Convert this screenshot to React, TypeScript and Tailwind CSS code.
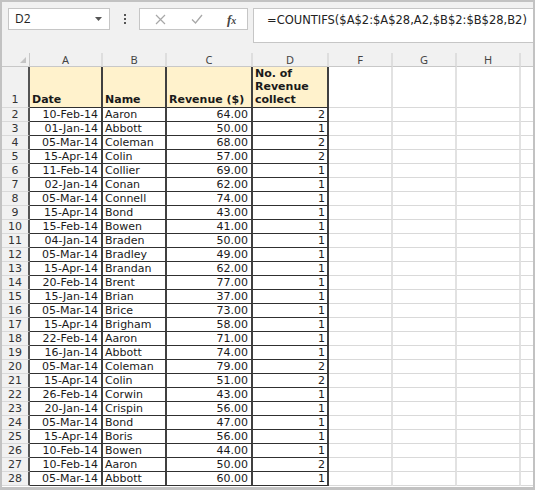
import React from "react";

const ROWS: [string, string, string, string][] = [
  ["10-Feb-14", "Aaron", "64.00", "2"],
  ["01-Jan-14", "Abbott", "50.00", "1"],
  ["05-Mar-14", "Coleman", "68.00", "2"],
  ["15-Apr-14", "Colin", "57.00", "2"],
  ["11-Feb-14", "Collier", "69.00", "1"],
  ["02-Jan-14", "Conan", "62.00", "1"],
  ["05-Mar-14", "Connell", "74.00", "1"],
  ["15-Apr-14", "Bond", "43.00", "1"],
  ["15-Feb-14", "Bowen", "41.00", "1"],
  ["04-Jan-14", "Braden", "50.00", "1"],
  ["05-Mar-14", "Bradley", "49.00", "1"],
  ["15-Apr-14", "Brandan", "62.00", "1"],
  ["20-Feb-14", "Brent", "77.00", "1"],
  ["15-Jan-14", "Brian", "37.00", "1"],
  ["05-Mar-14", "Brice", "73.00", "1"],
  ["15-Apr-14", "Brigham", "58.00", "1"],
  ["22-Feb-14", "Aaron", "71.00", "1"],
  ["16-Jan-14", "Abbott", "74.00", "1"],
  ["05-Mar-14", "Coleman", "79.00", "2"],
  ["15-Apr-14", "Colin", "51.00", "2"],
  ["26-Feb-14", "Corwin", "43.00", "1"],
  ["20-Jan-14", "Crispin", "56.00", "1"],
  ["05-Mar-14", "Bond", "47.00", "1"],
  ["15-Apr-14", "Boris", "56.00", "1"],
  ["10-Feb-14", "Bowen", "44.00", "1"],
  ["10-Feb-14", "Aaron", "50.00", "2"],
  ["05-Mar-14", "Abbott", "60.00", "1"],
];

const cell = "box-border shrink-0 border-b border-r-2 border-b-[#303030] border-r-[#404040] flex items-center";
const empty = "box-border shrink-0 border-b border-r-2 border-b-[#d9d9d9] border-r-[#e2e2e2]";

function Toolbar() {
  return (
    <div className="flex h-[51px] shrink-0 items-start bg-[#f1f1f1] pl-[6px] pt-[6px]">
      <div className="box-border flex h-[22px] w-[102px] items-center justify-between border border-[#c6c6c6] bg-white pl-[6px] pr-[7px] font-['Open_Sans',sans-serif] text-[12px] text-[#222]">
        <span>D2</span>
        <svg width="7" height="4" viewBox="0 0 7 4">
          <path d="M0 0h7L3.5 4z" fill="#555" />
        </svg>
      </div>
      <div className="flex h-[22px] w-[29px] flex-col items-center justify-center gap-[2px]">
        <span className="h-[2px] w-[2px] bg-[#555]" />
        <span className="h-[2px] w-[2px] bg-[#555]" />
        <span className="h-[2px] w-[2px] bg-[#555]" />
      </div>
      <div className="box-border flex h-[22px] w-[109px] items-center border border-[#c6c6c6] bg-white">
        <svg className="ml-[15px]" width="11" height="11" viewBox="0 0 11 11">
          <path d="M1 1l9 9M10 1l-9 9" stroke="#a8a8a8" strokeWidth="1.2" />
        </svg>
        <svg className="ml-[25px]" width="12" height="10" viewBox="0 0 12 10">
          <path d="M1 5.5l3.5 3.5L11 1" stroke="#a8a8a8" strokeWidth="1.3" fill="none" />
        </svg>
        <span className="ml-[24px] font-['Liberation_Serif',serif] text-[13px] font-bold italic leading-none text-[#444]">
          f<span className="text-[10px]">x</span>
        </span>
      </div>
      <div className="ml-[5px] box-border h-[35px] flex-1 border border-r-0 border-[#c6c6c6] bg-white pl-[13px] pt-[3px] font-['DejaVu_Sans',sans-serif] text-[11.5px] text-[#222]">
        =COUNTIFS($A$2:$A$28,A2,$B$2:$B$28,B2)
      </div>
    </div>
  );
}

function HeaderRow() {
  const cols: [string, string][] = [
    ["A", "w-[73px]"],
    ["B", "w-[64px]"],
    ["C", "w-[86px]"],
    ["D", "w-[76px]"],
    ["F", "w-[64px]"],
    ["G", "w-[64px]"],
    ["H", "w-[64px]"],
  ];
  return (
    <div className="flex h-[14px] shrink-0 bg-[#f1f1f1] font-['Noto_Sans',sans-serif] text-[11px] text-[#444]">
      <div className="relative box-border w-[28px] shrink-0 border-b border-r border-[#c8c8c8]">
        <svg className="absolute right-[3px] bottom-[3px]" width="6" height="6" viewBox="0 0 6 6">
          <path d="M6 0v6H0z" fill="#c4c4c4" />
        </svg>
      </div>
      {cols.map(([k, w]) => (
        <div
          key={k}
          className={`box-border flex shrink-0 items-center justify-center border-b border-r-2 border-b-[#c8c8c8] border-r-[#dedede] leading-none ${w}`}
        >
          {k}
        </div>
      ))}
      <div className="box-border flex-1 border-b border-[#c8c8c8]" />
    </div>
  );
}

export default function App() {
  return (
    <div className="box-border flex h-[490px] w-[535px] flex-col overflow-hidden border-2 border-b-[3px] border-[#c2c2c2] bg-white font-['DejaVu_Sans',sans-serif] text-[11px] text-[#1a1a1a]">
      <Toolbar />
      <HeaderRow />
      <div className="flex h-[41px] shrink-0 leading-[13px]">
        <div className="box-border flex w-[28px] shrink-0 items-end justify-center border-b border-r-2 border-b-[#d9d9d9] border-r-[#555] bg-[#f1f1f1] pb-[1px] text-[#333]">
          1
        </div>
        <div className={`${cell} w-[73px] items-end bg-[#fff2cc] pb-[1px] pl-[2px] font-bold`}>Date</div>
        <div className={`${cell} w-[64px] items-end bg-[#fff2cc] pb-[1px] pl-[2px] font-bold`}>Name</div>
        <div className={`${cell} w-[86px] items-end bg-[#fff2cc] pb-[1px] pl-[2px] font-bold`}>Revenue ($)</div>
        <div className={`${cell} w-[76px] items-end bg-[#fff2cc] pb-[1px] pl-[2px] font-bold`}>
          No. of
          <br />
          Revenue
          <br />
          collect
        </div>
        <div className={`${empty} w-[64px]`} />
        <div className={`${empty} w-[64px]`} />
        <div className={`${empty} w-[64px]`} />
        <div className="box-border flex-1 border-b border-[#d9d9d9]" />
      </div>
      {ROWS.map((r, i) => (
        <div key={i} className="flex h-[14px] shrink-0 leading-[13px]">
          <div className="box-border flex w-[28px] shrink-0 items-center justify-center border-b border-r-2 border-b-[#d9d9d9] border-r-[#555] bg-[#f1f1f1] text-[#333]">
            {i + 2}
          </div>
          <div className={`${cell} w-[73px] justify-end pr-[3px]`}>{r[0]}</div>
          <div className={`${cell} w-[64px] pl-[2px]`}>{r[1]}</div>
          <div className={`${cell} w-[86px] justify-end pr-[3px]`}>{r[2]}</div>
          <div className={`${cell} w-[76px] justify-end pr-[2px]`}>{r[3]}</div>
          <div className={`${empty} w-[64px]`} />
          <div className={`${empty} w-[64px]`} />
          <div className={`${empty} w-[64px]`} />
          <div className="box-border flex-1 border-b border-[#d9d9d9]" />
        </div>
      ))}
    </div>
  );
}
